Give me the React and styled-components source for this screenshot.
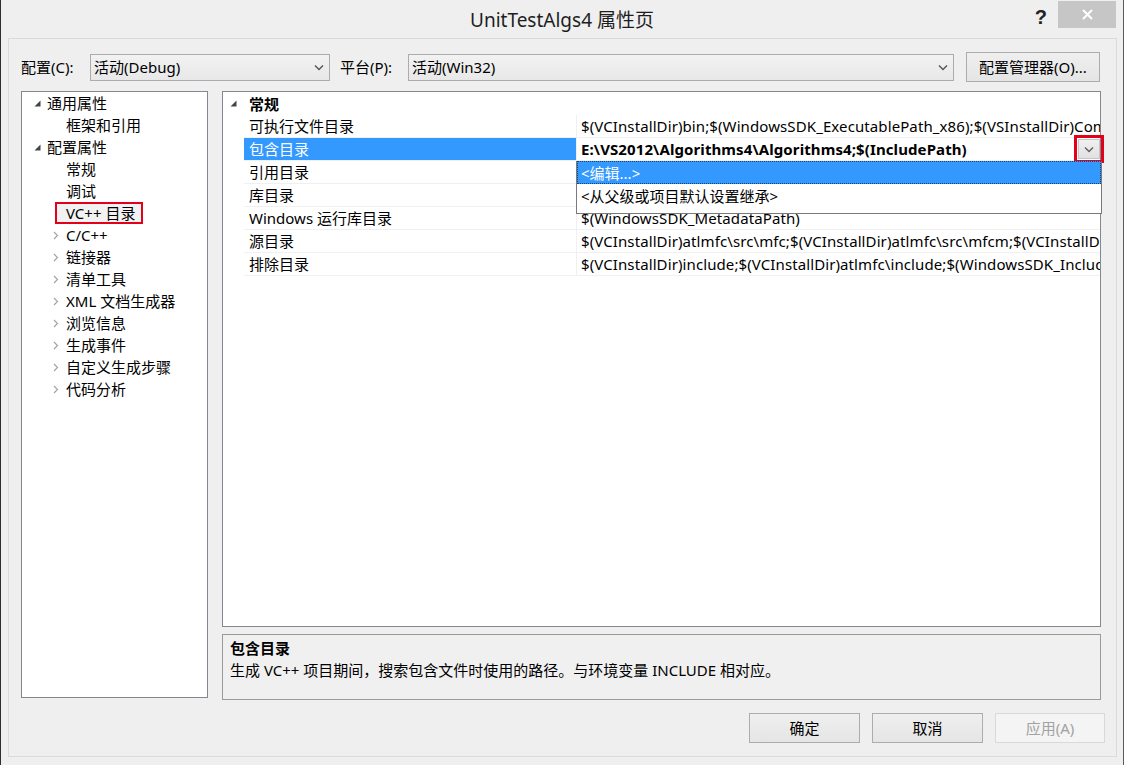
import React from "react";
import styled, { createGlobalStyle } from "styled-components";

const FONT = `"Noto Sans", "Noto Sans CJK SC", sans-serif`;

const Global = createGlobalStyle`
  html, body { margin: 0; padding: 0; background: #efefef; }
  body { font-family: ${FONT}; font-size: 15px; color: #000; }
  * { box-sizing: border-box; }
`;

const Window = styled.div`
  width: 1124px;
  height: 765px;
  background: #efefef;
  border-left: 1px solid #2e2e2e;
  border-right: 1px solid #5a5a5a;
  display: flex;
  flex-direction: column;
  overflow: hidden;
`;

const TitleBar = styled.div`
  height: 38px;
  flex: none;
  display: grid;
  grid-template-columns: 1fr auto 1fr;
  align-items: start;
`;

const Title = styled.div`
  grid-column: 2;
  font-size: 19px;
  line-height: 24px;
  margin-top: 8px;
  color: #1e1e1e;
`;

const TitleActions = styled.div`
  grid-column: 3;
  justify-self: end;
  display: flex;
  align-items: flex-start;
  margin-right: 7px;
`;

const HelpGlyph = styled.span`
  font-family: "Liberation Sans", sans-serif;
  font-weight: 700;
  font-size: 20px;
  line-height: 20px;
  margin-top: 7px;
  margin-right: 11px;
  color: #222;
`;

const CloseBtn = styled.div`
  width: 58px;
  height: 27px;
  margin-top: 1px;
  background: #c6c6c6;
  color: #fff;
  display: flex;
  align-items: center;
  justify-content: center;
`;

const Client = styled.div`
  flex: 1;
  margin: 0 6px 8px 7px;
  border: 1px solid #dadada;
  padding: 13px 11px 12px 12px;
  display: flex;
  flex-direction: column;
`;

const ConfigRow = styled.div`
  height: 30px;
  display: flex;
  align-items: center;
  margin-right: 5px;
  flex: none;
`;

const FieldLabel = styled.span`
  width: ${(p) => p.$w}px;
  flex: none;
  line-height: 20px;
  white-space: nowrap;
`;

const Combo = styled.div`
  height: 27px;
  width: ${(p) => (p.$w ? `${p.$w}px` : "auto")};
  flex: ${(p) => (p.$w ? "none" : "1")};
  border: 1px solid #acacac;
  background: linear-gradient(#f2f2f2, #e8e8e8);
  display: flex;
  align-items: center;
  padding: 0 5px 0 3px;
  margin-right: ${(p) => p.$mr || 0}px;
`;

const ComboText = styled.span`
  flex: 1;
  line-height: 20px;
  white-space: nowrap;
`;

const PushButton = styled.div`
  height: 30px;
  width: ${(p) => p.$w}px;
  flex: none;
  border: 1px solid ${(p) => (p.$disabled ? "#d9d9d9" : "#acacac")};
  background: ${(p) => (p.$disabled ? "#f4f4f4" : "linear-gradient(#efefef, #e5e5e5)")};
  color: ${(p) => (p.$disabled ? "#a2a2a2" : "#000")};
  display: flex;
  align-items: center;
  justify-content: center;
  line-height: 20px;
  white-space: nowrap;
`;

const Main = styled.div`
  height: 607px;
  margin-top: 9px;
  display: flex;
  gap: 14px;
  flex: none;
`;

const Tree = styled.div`
  width: 187px;
  flex: none;
  background: #fff;
  border: 1px solid #828790;
`;

const TreeRow = styled.div`
  height: 22px;
  display: flex;
  align-items: center;
  padding-left: ${(p) => 11 + p.$level * 19}px;
`;

const Expander = styled.span`
  width: 14px;
  height: 22px;
  flex: none;
  display: flex;
  align-items: center;
  justify-content: flex-start;
  padding-left: 1px;
`;

const TreeLabel = styled.span`
  line-height: 20px;
  white-space: nowrap;
  ${(p) =>
    p.$marked &&
    `
    height: 22px;
    margin-left: -11px;
    padding: 0 6px 0 9px;
    border: 2px solid #e2001a;
    background: #f2f2f2;
    display: flex;
    align-items: center;
  `}
`;

const RightCol = styled.div`
  flex: 1;
  display: flex;
  flex-direction: column;
  gap: 7px;
  margin-right: 4px;
`;

const Grid = styled.div`
  height: 536px;
  flex: none;
  position: relative;
  background: #fff;
  border: 1px solid #828790;
`;

const PropRow = styled.div`
  display: grid;
  grid-template-columns: 21px 332px 1fr;
  height: 23px;
`;

const Gutter = styled.div`
  display: flex;
  align-items: center;
  justify-content: center;
`;

const NameCell = styled.div`
  display: flex;
  align-items: center;
  padding-left: 5px;
  line-height: 20px;
  white-space: nowrap;
  font-weight: ${(p) => (p.$bold ? 700 : 400)};
  background: ${(p) => (p.$selected ? "#3399ff" : "#fff")};
  color: ${(p) => (p.$selected ? "#fff" : "#000")};
  border-bottom: ${(p) => (p.$header ? "none" : "1px solid #f0f0f0")};
`;

const ValueCell = styled.div`
  display: flex;
  align-items: center;
  min-width: 0;
  padding-left: 4px;
  border-left: 1px solid #f0f0f0;
  border-bottom: 1px solid #f0f0f0;
`;

const ValueText = styled.span`
  flex: 1;
  min-width: 0;
  overflow: hidden;
  white-space: nowrap;
  line-height: 20px;
  letter-spacing: 0.1px;
  font-weight: ${(p) => (p.$bold ? 700 : 400)};
`;

const DropButton = styled.div`
  width: 22px;
  height: 20px;
  flex: none;
  margin-right: 0px;
  background: linear-gradient(#f0f0f0, #e1e1e1);
  border: 1px solid #c5c5c5;
  outline: 3px solid #e2001a;
  outline-offset: 1px;
  display: flex;
  align-items: center;
  justify-content: center;
`;

const DropList = styled.div`
  position: absolute;
  left: 353px;
  top: 69px;
  width: 526px;
  height: 53px;
  background: #fff;
  border: 1px solid #7a7a7a;
  border-top: none;
`;

const DropItem = styled.div`
  height: 23px;
  display: flex;
  align-items: center;
  padding-left: 4px;
  line-height: 20px;
  white-space: nowrap;
  background: ${(p) => (p.$active ? "#3399ff" : "#fff")};
  color: ${(p) => (p.$active ? "#fff" : "#000")};
  outline: ${(p) => (p.$active ? "1px dotted #1a3f73" : "none")};
  outline-offset: -1px;
`;

const Desc = styled.div`
  height: 66px;
  flex: none;
  background: #f0f0f0;
  border: 1px solid #9a9a9a;
  padding: 2px 7px;
`;

const DescTitle = styled.div`
  font-weight: 700;
  line-height: 22px;
`;

const DescText = styled.div`
  font-size: 15px;
  line-height: 22px;
  white-space: nowrap;
`;

const ButtonRow = styled.div`
  margin-top: 15px;
  display: flex;
  justify-content: flex-end;
  gap: 12px;
  flex: none;
`;

const Chevron = ({ color = "#555" }) => (
  <svg width="10" height="7" viewBox="0 0 10 7">
    <path d="M1 1.5 L5 5.5 L9 1.5" fill="none" stroke={color} strokeWidth="1.4" />
  </svg>
);

const Expanded = () => (
  <svg width="7" height="7" viewBox="0 0 7 7">
    <path d="M6.5 0.5 L6.5 6.5 L0.5 6.5 Z" fill="#444" />
  </svg>
);

const Collapsed = () => (
  <svg width="6" height="9" viewBox="0 0 6 9">
    <path d="M1 1 L4.5 4.5 L1 8" fill="none" stroke="#a0a0a0" strokeWidth="1.1" />
  </svg>
);

const tree = [
  { label: "通用属性", level: 0, exp: "open" },
  { label: "框架和引用", level: 1 },
  { label: "配置属性", level: 0, exp: "open" },
  { label: "常规", level: 1 },
  { label: "调试", level: 1 },
  { label: "VC++ 目录", level: 1, marked: true },
  { label: "C/C++", level: 1, exp: "closed" },
  { label: "链接器", level: 1, exp: "closed" },
  { label: "清单工具", level: 1, exp: "closed" },
  { label: "XML 文档生成器", level: 1, exp: "closed" },
  { label: "浏览信息", level: 1, exp: "closed" },
  { label: "生成事件", level: 1, exp: "closed" },
  { label: "自定义生成步骤", level: 1, exp: "closed" },
  { label: "代码分析", level: 1, exp: "closed" },
];

const props = [
  { name: "可执行文件目录", value: "$(VCInstallDir)bin;$(WindowsSDK_ExecutablePath_x86);$(VSInstallDir)Common7\\Tools\\bin;$(PATH)" },
  { name: "包含目录", value: "E:\\VS2012\\Algorithms4\\Algorithms4;$(IncludePath)", selected: true },
  { name: "引用目录", value: "$(VCInstallDir)atlmfc\\lib;$(VCInstallDir)lib" },
  { name: "库目录", value: "$(VCInstallDir)lib;$(VCInstallDir)atlmfc\\lib;$(WindowsSDK_LibraryPath_x86)" },
  { name: "Windows 运行库目录", value: "$(WindowsSDK_MetadataPath)" },
  { name: "源目录", value: "$(VCInstallDir)atlmfc\\src\\mfc;$(VCInstallDir)atlmfc\\src\\mfcm;$(VCInstallDir)atlmfc\\src\\atl;$(VCInstallDir)crt\\src" },
  { name: "排除目录", value: "$(VCInstallDir)include;$(VCInstallDir)atlmfc\\include;$(WindowsSDK_IncludePath);$(MSBuildToolsPath32)" },
];

export default function App() {
  return (
    <>
      <Global />
      <Window>
        <TitleBar>
          <Title>UnitTestAlgs4 属性页</Title>
          <TitleActions>
            <HelpGlyph>?</HelpGlyph>
            <CloseBtn>
              <svg width="11" height="11" viewBox="0 0 11 11">
                <path d="M1 1 L10 10 M10 1 L1 10" stroke="#fff" strokeWidth="2" />
              </svg>
            </CloseBtn>
          </TitleActions>
        </TitleBar>
        <Client>
          <ConfigRow>
            <FieldLabel $w={69}>配置(C):</FieldLabel>
            <Combo $w={240} $mr={10}>
              <ComboText>活动(Debug)</ComboText>
              <Chevron />
            </Combo>
            <FieldLabel $w={68}>平台(P):</FieldLabel>
            <Combo $mr={12}>
              <ComboText>活动(Win32)</ComboText>
              <Chevron />
            </Combo>
            <PushButton $w={134}>配置管理器(O)...</PushButton>
          </ConfigRow>
          <Main>
            <Tree>
              {tree.map((t) => (
                <TreeRow key={t.label} $level={t.level}>
                  <Expander>
                    {t.exp === "open" && <Expanded />}
                    {t.exp === "closed" && <Collapsed />}
                  </Expander>
                  <TreeLabel $marked={t.marked}>{t.label}</TreeLabel>
                </TreeRow>
              ))}
            </Tree>
            <RightCol>
              <Grid>
                <PropRow>
                  <Gutter>
                    <Expanded />
                  </Gutter>
                  <NameCell $header $bold>常规</NameCell>
                  <div />
                </PropRow>
                {props.map((p) => (
                  <PropRow key={p.name}>
                    <Gutter />
                    <NameCell $selected={p.selected}>{p.name}</NameCell>
                    <ValueCell>
                      <ValueText $bold={p.selected}>{p.value}</ValueText>
                      {p.selected && (
                        <DropButton>
                          <Chevron color="#606060" />
                        </DropButton>
                      )}
                    </ValueCell>
                  </PropRow>
                ))}
                <DropList>
                  <DropItem $active>&lt;编辑...&gt;</DropItem>
                  <DropItem>&lt;从父级或项目默认设置继承&gt;</DropItem>
                </DropList>
              </Grid>
              <Desc>
                <DescTitle>包含目录</DescTitle>
                <DescText>生成 VC++ 项目期间，搜索包含文件时使用的路径。与环境变量 INCLUDE 相对应。</DescText>
              </Desc>
            </RightCol>
          </Main>
          <ButtonRow>
            <PushButton $w={111}>确定</PushButton>
            <PushButton $w={111}>取消</PushButton>
            <PushButton $w={110} $disabled>应用(A)</PushButton>
          </ButtonRow>
        </Client>
      </Window>
    </>
  );
}
